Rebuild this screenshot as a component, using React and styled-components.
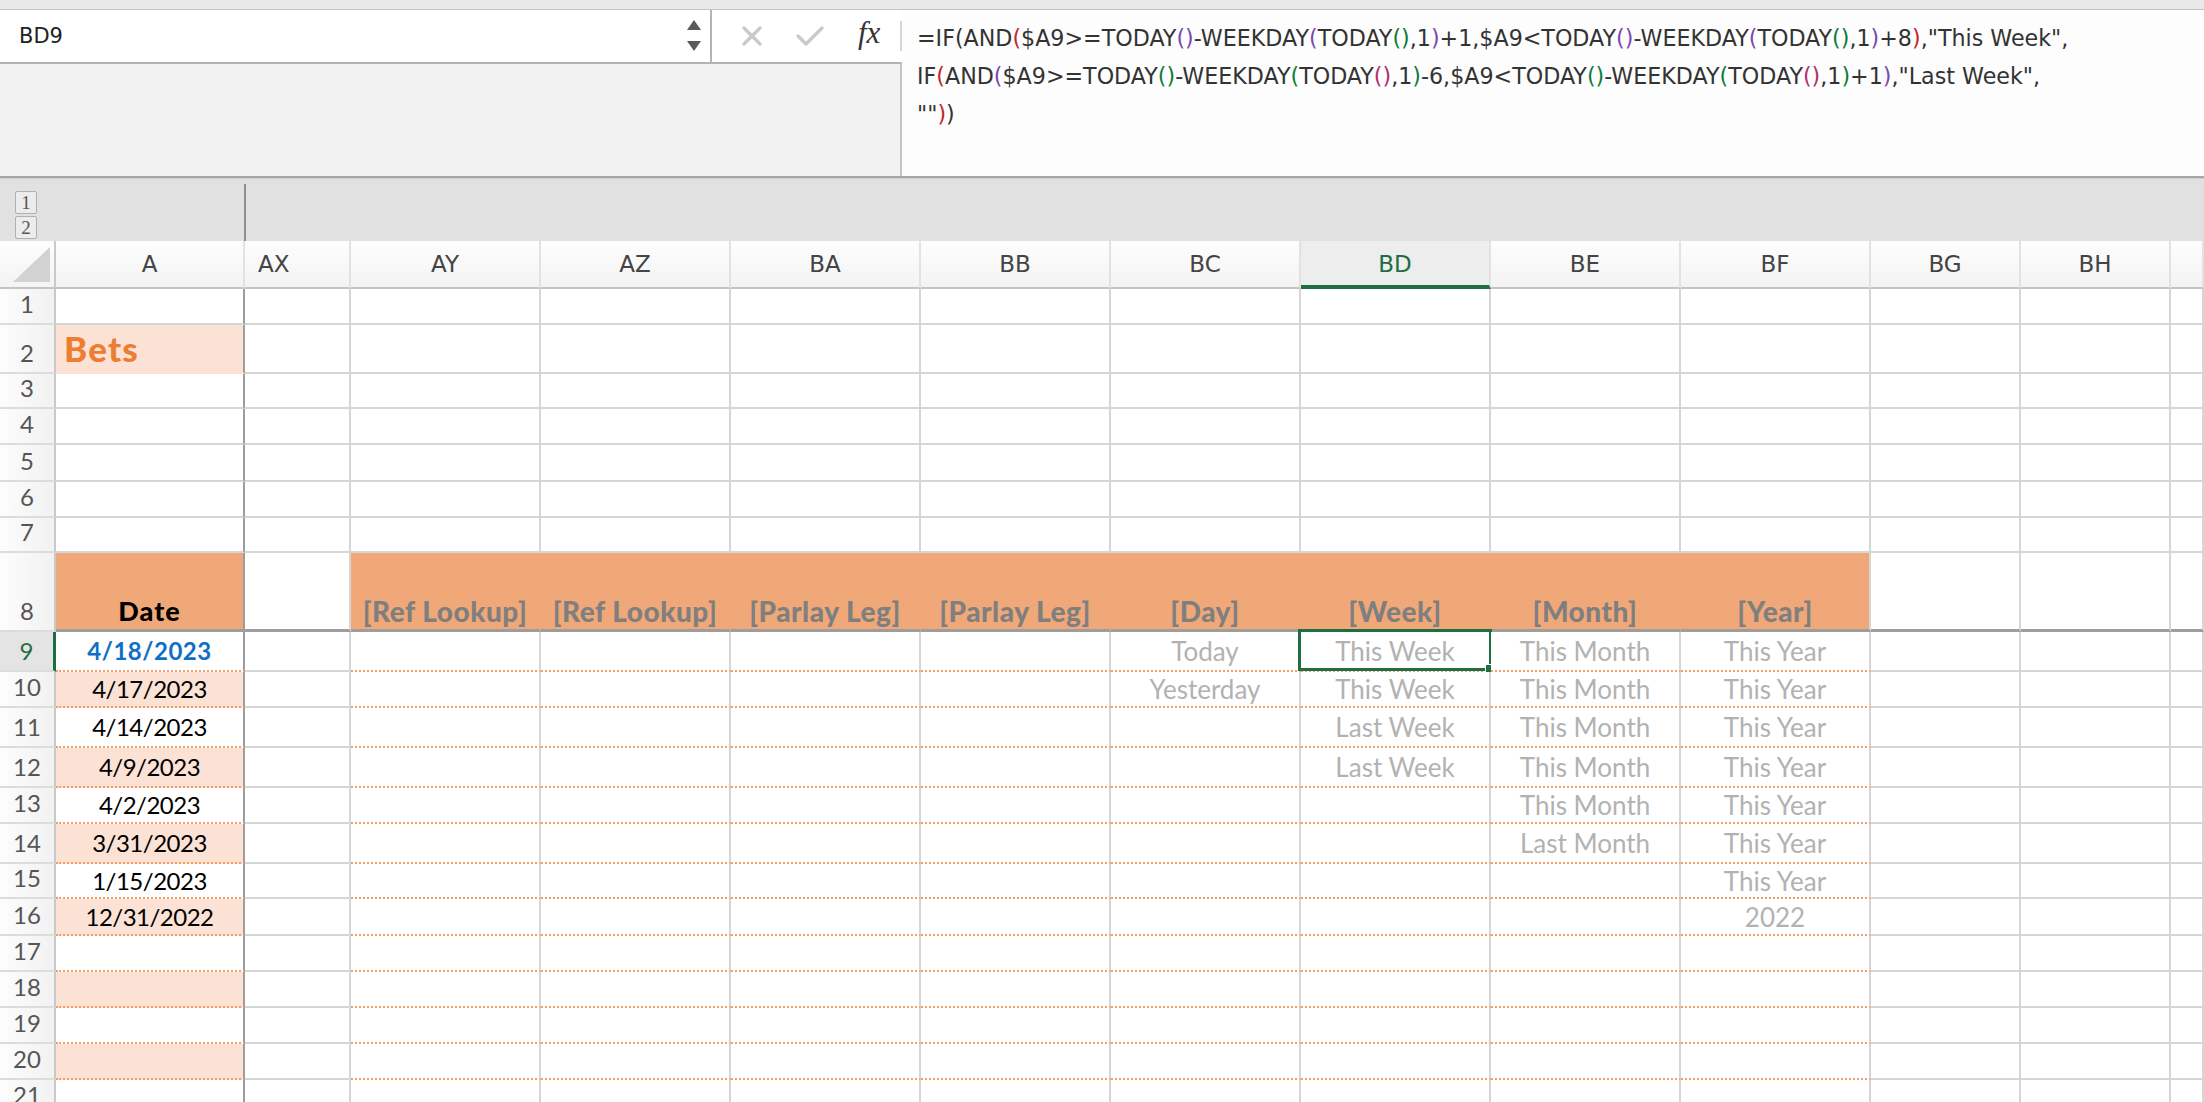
import React from 'react';
import styled, { createGlobalStyle, css } from 'styled-components';

// Excel sheet: formula bar + frozen header + date buckets

const GlobalStyle = createGlobalStyle`
  html, body { margin: 0; padding: 0; background: #fff; }
  body { width: 2204px; height: 1102px; overflow: hidden; font-family: 'DejaVu Sans', sans-serif; }
`;

const C = {
  grid: '#d6d6d6',
  freeze: '#9d9d9d',
  dot: '#ef9f6a',
  band: '#fbe2d5',
  head: '#f0a878',
  green: '#1f6e43',
};

const COLS = ['A', 'AX', 'AY', 'AZ', 'BA', 'BB', 'BC', 'BD', 'BE', 'BF', 'BG', 'BH', 'BI'];
const TABLE = ['AY', 'AZ', 'BA', 'BB', 'BC', 'BD', 'BE', 'BF'];
const TEMPLATE = '56px 189px 106px repeat(8, 190px) 150px 150px 33px';

const HEADINGS = {
  A: 'Date',
  AY: '[Ref Lookup]',
  AZ: '[Ref Lookup]',
  BA: '[Parlay Leg]',
  BB: '[Parlay Leg]',
  BC: '[Day]',
  BD: '[Week]',
  BE: '[Month]',
  BF: '[Year]',
};

const rows = [
  { n: 1, h: 36 },
  { n: 2, h: 49, title: 'Bets' },
  { n: 3, h: 35 },
  { n: 4, h: 36 },
  { n: 5, h: 37 },
  { n: 6, h: 36 },
  { n: 7, h: 35 },
  { n: 8, h: 79, header: true },
  { n: 9, h: 40, table: true, date: '4/18/2023', BC: 'Today', BD: 'This Week', BE: 'This Month', BF: 'This Year' },
  { n: 10, h: 36, table: true, date: '4/17/2023', BC: 'Yesterday', BD: 'This Week', BE: 'This Month', BF: 'This Year' },
  { n: 11, h: 40, table: true, date: '4/14/2023', BD: 'Last Week', BE: 'This Month', BF: 'This Year' },
  { n: 12, h: 40, table: true, date: '4/9/2023', BD: 'Last Week', BE: 'This Month', BF: 'This Year' },
  { n: 13, h: 36, table: true, date: '4/2/2023', BE: 'This Month', BF: 'This Year' },
  { n: 14, h: 40, table: true, date: '3/31/2023', BE: 'Last Month', BF: 'This Year' },
  { n: 15, h: 35, table: true, date: '1/15/2023', BF: 'This Year' },
  { n: 16, h: 37, table: true, date: '12/31/2022', BF: '2022' },
  { n: 17, h: 36, table: true },
  { n: 18, h: 36, table: true },
  { n: 19, h: 36, table: true },
  { n: 20, h: 36, table: true },
  { n: 21, h: 36 },
];

const P = { dark: '#333', red: '#c0282d', purple: '#7b47b3', green: '#0c7d3a', pink: '#b0306f' };

const formula = [
  [
    ['=IF(AND', 'dark'], ['(', 'red'], ['$A9>=TODAY', 'dark'], ['()', 'purple'], ['-WEEKDAY', 'dark'],
    ['(', 'purple'], ['TODAY', 'dark'], ['()', 'green'], [',1', 'dark'], [')', 'purple'],
    ['+1,$A9<TODAY', 'dark'], ['()', 'purple'], ['-WEEKDAY', 'dark'], ['(', 'purple'], ['TODAY', 'dark'],
    ['()', 'green'], [',1', 'dark'], [')', 'purple'], ['+8', 'dark'], [')', 'red'], [',"This Week",', 'dark'],
  ],
  [
    ['IF', 'dark'], ['(', 'red'], ['AND', 'dark'], ['(', 'purple'], ['$A9>=TODAY', 'dark'], ['()', 'green'],
    ['-WEEKDAY', 'dark'], ['(', 'green'], ['TODAY', 'dark'], ['()', 'pink'], [',1', 'dark'], [')', 'green'],
    ['-6,$A9<TODAY', 'dark'], ['()', 'green'], ['-WEEKDAY', 'dark'], ['(', 'green'], ['TODAY', 'dark'],
    ['()', 'pink'], [',1', 'dark'], [')', 'green'], ['+1', 'dark'], [')', 'purple'], [',"Last Week",', 'dark'],
  ],
  [['""', 'dark'], [')', 'red'], [')', 'dark']],
];

const edge = (kind, fill) => {
  switch (kind) {
    case 'grid': return `2px solid ${C.grid}`;
    case 'freeze': return `2px solid ${C.freeze}`;
    case 'freezeH': return `3px solid ${C.freeze}`;
    case 'dot': return `2px dotted ${C.dot}`;
    case 'fill': return `2px solid ${fill}`;
    default: return 'none';
  }
};

const cellProps = (row, col) => {
  const isTable = TABLE.includes(col);
  const p = { fill: null, right: 'grid', bottom: 'grid', align: 'center', valign: 'center', text: null, kind: null };

  if (col === 'A') p.right = 'freeze';

  if (row.title && col === 'A') {
    Object.assign(p, { fill: C.band, bottom: 'fill', align: 'left', valign: 'bottom', text: row.title, kind: 'title' });
  }

  if (row.header) {
    p.bottom = 'freezeH';
    p.valign = 'bottom';
    if (col === 'A' || isTable) p.fill = C.head;
    if (isTable && col !== 'BF') p.right = 'fill';
    if (HEADINGS[col]) {
      p.text = HEADINGS[col];
      p.kind = col === 'A' ? 'head' : 'label';
    }
  }

  if (row.table) {
    if (col === 'A' || isTable) p.bottom = 'dot';
    if (col === 'A' && row.n % 2 === 0) p.fill = C.band;
    if (col === 'A' && row.date) {
      p.text = row.date;
      p.kind = row.n === 9 ? 'dateSel' : 'date';
    }
    if (row[col]) {
      p.text = row[col];
      p.kind = 'muted';
    }
  }
  return p;
};

export default function App() {
  return (
    <>
      <GlobalStyle />
      <TopStrip />
      <FormulaRow>
        <LeftPane>
          <ToolRow>
            <NameBox>
              <NameText>BD9</NameText>
              <Spinner width="16" height="34" viewBox="0 0 16 34">
                <path d="M8 1 L15 11 L1 11 Z" fill="#5a5a5a" />
                <path d="M1 22 L15 22 L8 32 Z" fill="#5a5a5a" />
              </Spinner>
            </NameBox>
            <Buttons>
              <ToolIcon width="20" height="20" viewBox="0 0 20 20" $gap={30}>
                <path d="M2 2 L18 18 M18 2 L2 18" stroke="#c9c9c9" strokeWidth="3.2" strokeLinecap="round" />
              </ToolIcon>
              <ToolIcon width="28" height="20" viewBox="0 0 28 20" $gap={34}>
                <path d="M2 10 L10 18 L26 2" stroke="#c9c9c9" strokeWidth="3.2" fill="none" strokeLinecap="round" strokeLinejoin="round" />
              </ToolIcon>
              <Fx>fx</Fx>
              <ToolSep />
            </Buttons>
          </ToolRow>
          <GrayFill />
        </LeftPane>
        <FormulaText>
          {formula.map((line, i) => (
            <FormulaLine key={i}>
              {line.map(([t, c], j) => (
                <Tok key={j} $c={P[c]}>{t}</Tok>
              ))}
            </FormulaLine>
          ))}
        </FormulaText>
      </FormulaRow>

      <OutlineBar>
        <OutlineLeft>
          <LevelBtn>1</LevelBtn>
          <LevelBtn>2</LevelBtn>
        </OutlineLeft>
      </OutlineBar>

      <Sheet>
        <HeadRow>
          <Corner>
            <svg width="40" height="36" viewBox="0 0 40 36">
              <path d="M38 0 L38 35 L1 35 Z" fill="#d2d2d2" />
            </svg>
          </Corner>
          {COLS.map((c) => (
            <ColHead key={c} $selected={c === 'BD'} $left={c === 'AX'}>
              {c === 'BI' ? '' : c}
            </ColHead>
          ))}
        </HeadRow>

        {rows.map((row) => (
          <Row key={row.n} $h={row.h}>
            <RowNum $selected={row.n === 9}>{row.n}</RowNum>
            {COLS.map((col) => {
              const p = cellProps(row, col);
              return (
                <Cell
                  key={col}
                  $fill={p.fill}
                  $right={p.right}
                  $bottom={p.bottom}
                  $align={p.align}
                  $valign={p.valign}
                >
                  {p.text && <CellText $kind={p.kind}>{p.text}</CellText>}
                  {row.n === 9 && col === 'BD' && (
                    <Selection>
                      <FillHandle />
                    </Selection>
                  )}
                </Cell>
              );
            })}
          </Row>
        ))}
      </Sheet>
    </>
  );
}

// --- Styled Components ---

const TopStrip = styled.div`
  height: 9px;
  background: #e9e9e9;
  border-bottom: 1px solid #c4c4c4;
`;

const FormulaRow = styled.div`
  display: flex;
  height: 166px;
  border-bottom: 2px solid #a6a6a6;
`;

const LeftPane = styled.div`
  width: 902px;
  flex-shrink: 0;
  display: flex;
  flex-direction: column;
`;

const ToolRow = styled.div`
  display: flex;
  height: 52px;
  background: #fff;
`;

const NameBox = styled.div`
  box-sizing: border-box;
  width: 712px;
  flex-shrink: 0;
  display: flex;
  align-items: center;
  justify-content: space-between;
  padding: 0 8px 0 19px;
  border-right: 2px solid #b5b5b5;
`;

const NameText = styled.span`
  font-family: 'DejaVu Sans', sans-serif;
  font-size: 21px;
  color: #222;
`;

const Spinner = styled.svg`
  display: block;
`;

const Buttons = styled.div`
  flex: 1;
  display: flex;
  align-items: center;
`;

const ToolIcon = styled.svg`
  display: block;
  flex-shrink: 0;
  margin-left: ${(p) => p.$gap}px;
`;

const Fx = styled.span`
  font-family: 'Liberation Serif', serif;
  font-style: italic;
  font-size: 31px;
  color: #333;
  margin: -6px 0 0 34px;
`;

const ToolSep = styled.div`
  width: 2px;
  height: 30px;
  margin-left: auto;
  background: #d6d6d6;
`;

const GrayFill = styled.div`
  flex: 1;
  background: #f2f2f2;
  border-top: 2px solid #b3b3b3;
  border-right: 2px solid #c4c4c4;
`;

const FormulaText = styled.div`
  flex: 1;
  background: #fdfdfd;
  padding: 9px 0 0 15px;
  font-family: 'DejaVu Sans', sans-serif;
  font-size: 22.2px;
  line-height: 38px;
  color: #333;
`;

const FormulaLine = styled.div`
  white-space: pre;
`;

const Tok = styled.span`
  color: ${(p) => p.$c};
`;

const OutlineBar = styled.div`
  display: flex;
  height: 62px;
  background: #e1e1e1;
  border-top: 1px solid #cfcfcf;
`;

const OutlineLeft = styled.div`
  box-sizing: border-box;
  width: 246px;
  display: flex;
  flex-direction: column;
  gap: 2px;
  padding: 7px 0 0 15px;
  border-right: 2px solid #8f8f8f;
  margin-top: 5px;
`;

const LevelBtn = styled.div`
  box-sizing: border-box;
  width: 22px;
  height: 23px;
  display: flex;
  align-items: center;
  justify-content: center;
  background: #ececec;
  border: 1px solid #b0b0b0;
  border-radius: 2px;
  font-family: 'Liberation Serif', serif;
  font-size: 19px;
  color: #555;
`;

const Sheet = styled.div`
  display: flex;
  flex-direction: column;
`;

const HeadRow = styled.div`
  display: grid;
  grid-template-columns: ${TEMPLATE};
  height: 48px;
  background: linear-gradient(#fdfdfd, #f3f3f3);
`;

const Corner = styled.div`
  box-sizing: border-box;
  display: flex;
  align-items: flex-end;
  justify-content: flex-end;
  padding: 0 2px 4px 0;
  border-right: 2px solid #c9c9c9;
  border-bottom: 2px solid #c4c4c4;
`;

const ColHead = styled.div`
  box-sizing: border-box;
  display: flex;
  align-items: center;
  justify-content: ${(p) => (p.$left ? 'flex-start' : 'center')};
  padding-left: ${(p) => (p.$left ? '13px' : '0')};
  font-family: 'DejaVu Sans', sans-serif;
  font-size: 23px;
  color: #444;
  border-right: 2px solid #e2e2e2;
  border-bottom: 2px solid #c4c4c4;
  ${(p) =>
    p.$selected &&
    css`
      background: #ededed;
      color: ${C.green};
      border-bottom: 4px solid ${C.green};
      padding-top: 2px;
    `}
`;

const Row = styled.div`
  display: grid;
  grid-template-columns: ${TEMPLATE};
  height: ${(p) => p.$h}px;
`;

const RowNum = styled.div`
  box-sizing: border-box;
  display: flex;
  align-items: flex-end;
  justify-content: center;
  padding-bottom: 7px;
  font-family: Lato, 'Open Sans', sans-serif;
  font-size: 24px;
  line-height: 1;
  color: #555;
  background: linear-gradient(to right, #fdfdfd, #f1f1f1);
  border-right: 2px solid #c9c9c9;
  border-bottom: 2px solid #dcdcdc;
  ${(p) =>
    p.$selected &&
    css`
      background: #e4e4e4;
      color: ${C.green};
      border-right: 3px solid ${C.green};
    `}
`;

const Cell = styled.div`
  box-sizing: border-box;
  position: relative;
  display: flex;
  align-items: ${(p) => (p.$valign === 'bottom' ? 'flex-end' : 'center')};
  justify-content: ${(p) => (p.$align === 'left' ? 'flex-start' : 'center')};
  padding-left: ${(p) => (p.$align === 'left' ? '8px' : '0')};
  background: ${(p) => p.$fill || '#fff'};
  border-right: ${(p) => edge(p.$right, p.$fill)};
  border-bottom: ${(p) => edge(p.$bottom, p.$fill)};
  white-space: nowrap;
`;

const kinds = {
  title: css`
    font-size: 35px;
    font-weight: 900;
    color: #ed7d31;
    letter-spacing: 1.2px;
    padding-bottom: 6px;
  `,
  head: css`
    font-size: 27px;
    font-weight: 900;
    color: #000;
    letter-spacing: 1px;
    padding-bottom: 5px;
  `,
  label: css`
    font-size: 28px;
    font-weight: 900;
    color: #7f7f7f;
    letter-spacing: 0.5px;
    padding-bottom: 4px;
  `,
  date: css`
    font-size: 24px;
    color: #000;
    letter-spacing: -0.5px;
  `,
  dateSel: css`
    font-size: 24px;
    font-weight: 700;
    color: #0f6fc6;
    letter-spacing: 0.5px;
  `,
  muted: css`
    font-size: 26px;
    color: #b2b2b2;
  `,
};

const CellText = styled.span`
  font-family: Lato, 'Open Sans', sans-serif;
  line-height: 1;
  ${(p) => kinds[p.$kind]}
`;

const Selection = styled.div`
  position: absolute;
  top: -3px;
  left: -3px;
  right: -3px;
  bottom: -1px;
  border: 3px solid ${C.green};
  pointer-events: none;
`;

const FillHandle = styled.div`
  position: absolute;
  right: -8px;
  bottom: -8px;
  width: 10px;
  height: 10px;
  background: ${C.green};
  border: 1px solid #fff;
`;
